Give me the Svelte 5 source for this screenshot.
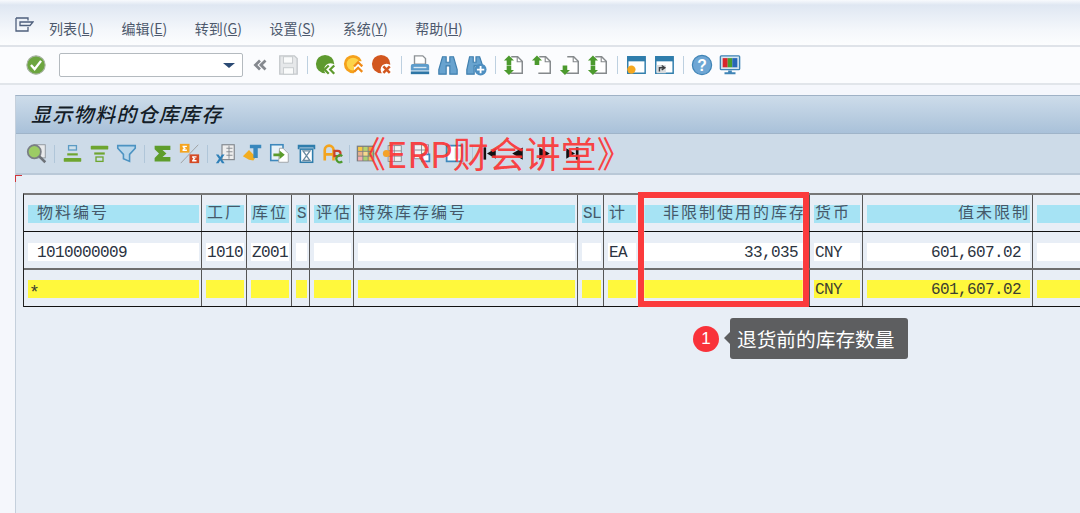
<script>
  const menus = [['列表','L'],['编辑','E'],['转到','G'],['设置','S'],['系统','Y'],['帮助','H']];
  const header = [
    {t:'物料编号',k:'lead'},{t:'工厂'},{t:'库位'},{t:'S',k:'latin'},{t:'评估',k:'mid'},{t:'特殊库存编号'},
    {t:'SL',k:'latin'},{t:'计'},{t:'非限制使用的库存',k:'end'},{t:'货币'},{t:'值未限制',k:'end'},{t:''}
  ];
  const dataRow = [
    {t:'1010000009',k:'lead'},{t:'1010'},{t:'Z001'},{t:''},{t:''},{t:''},{t:''},{t:'EA'},
    {t:'33,035',k:'end'},{t:'CNY'},{t:'601,607.02',k:'end'},{t:''}
  ];
  const sumRow = [
    {t:'*',k:'star'},{t:''},{t:''},{t:''},{t:''},{t:''},{t:''},{t:''},{t:''},{t:'CNY'},{t:'601,607.02',k:'end'},{t:''}
  ];
</script>

{#snippet page(up, down)}
  <svg class="ic" viewBox="0 0 24 24">
    <path d="M9 3h7l5 5v13H8" fill="#fff" stroke="#85898c" stroke-width="1.6"/>
    <path d="M15.5 3v5.5H21" fill="none" stroke="#85898c" stroke-width="1.2"/>
    {#if up}<path d="M6.500 1.500l5.500 5.500H9v5H4V7H1z" fill="#4c9a2e"/>{/if}
    {#if down}<path d="M6.500 23l5.500-5.500H9v-5H4v5H1z" fill="#4c9a2e"/>{/if}
  </svg>
{/snippet}

<div class="screen">
  <header class="menubar">
    <svg class="menuicon" viewBox="0 0 19 15">
      <path d="M1 1h12v2.500M1 1v13h12V10M5 5h13l-3 3.500H5z" fill="none" stroke="#4e5f7c" stroke-width="1.300"/>
    </svg>
    <nav class="menus">
      {#each menus as [label, key]}
        <span class="menu">{label}(<u>{key}</u>)</span>
      {/each}
    </nav>
  </header>

  <div class="systool">
    <span class="slot first"><svg class="ic" viewBox="0 0 24 24"><circle cx="12" cy="12" r="10" fill="#6ca53f" stroke="#a7b3a3" stroke-width="1.200"/><path d="M6.500 12l4 4.500 7-9" fill="none" stroke="#fff" stroke-width="2.600"/></svg></span>
    <div class="cmd"><svg class="drop" viewBox="0 0 12 6"><path d="M0 0h12L6 5z" fill="#2b4a74"/></svg></div>
    <span class="slot after"><svg class="ic" viewBox="0 0 24 24"><path d="M12 7l-5 5 5 5M18 7l-5 5 5 5" fill="none" stroke="#85898f" stroke-width="3"/></svg></span>
    <span class="slot"><svg class="ic" viewBox="0 0 24 24"><path d="M3 2h16l3 3v17H3z" fill="#e6e8ea" stroke="#c5c9cc" stroke-width="1.500"/><rect x="7" y="3" width="10" height="7" fill="#fafbfb" stroke="#c5c9cc"/><rect x="7" y="15" width="11" height="7" fill="#fafbfb" stroke="#c5c9cc"/></svg></span>
    <span class="sep"></span>
    <span class="slot"><svg class="ic" viewBox="0 0 24 24"><circle cx="11" cy="11" r="10" fill="#5e9a2f"/><circle cx="17" cy="17" r="7" fill="#fff"/><path d="M15 12.500l-4.500 4.500 4.500 4.500M21 12.500l-4.500 4.500 4.500 4.500" fill="none" stroke="#5e9a2f" stroke-width="2.400"/></svg></span>
    <span class="slot"><svg class="ic" viewBox="0 0 24 24"><circle cx="11" cy="11" r="10" fill="#f5a11c"/><circle cx="11" cy="11" r="7" fill="#fdd44a"/><path d="M17 8h4v16h-9V12z" fill="#fff"/><path d="M12 13.500l4.500-4.500 4.500 4.500M12 19.500l4.500-4.500 4.500 4.500" fill="none" stroke="#ef8a17" stroke-width="2.400"/></svg></span>
    <span class="slot"><svg class="ic" viewBox="0 0 24 24"><circle cx="11" cy="11" r="10" fill="#d2571f"/><circle cx="17" cy="17" r="6.500" fill="#fff"/><path d="M13.500 13.500l7 7M20.500 13.500l-7 7" stroke="#d2571f" stroke-width="2.800"/></svg></span>
    <span class="sep"></span>
    <span class="slot"><svg class="ic" viewBox="0 0 24 24"><path d="M6 2h9l3 3v6H6z" fill="#fff" stroke="#8d9296" stroke-width="1.500"/><path d="M4 11h16a2 2 0 0 1 2 2v5H2v-5a2 2 0 0 1 2-2z" fill="#5d9ccb"/><rect x="2" y="19" width="20" height="3" fill="#2e76a6"/><rect x="5" y="14" width="14" height="1.500" fill="#d7e8f4"/></svg></span>
    <span class="slot"><svg class="ic" viewBox="0 0 24 24"><path d="M6 3h4v6h4V3h4l4 14v5h-8v-9h-4v9H2v-5z" fill="#68a3cf" stroke="#3f7fae" stroke-width="1.300"/></svg></span>
    <span class="slot"><svg class="ic" viewBox="0 0 24 24"><path d="M5 3h4v6h3V3h4l3 9v3H13v-2h-3v9H2v-5z" fill="#68a3cf" stroke="#3f7fae" stroke-width="1.300"/><circle cx="17" cy="17" r="6.500" fill="#4e8fc1"/><path d="M17 13v8M13 17h8" stroke="#fff" stroke-width="2"/></svg></span>
    <span class="sep"></span>
    <span class="slot">{@render page(true, true)}</span>
    <span class="slot">{@render page(true, false)}</span>
    <span class="slot">{@render page(false, true)}</span>
    <span class="slot">{@render page(true, true)}</span>
    <span class="sep"></span>
    <span class="slot"><svg class="ic" viewBox="0 0 24 24"><rect x="3" y="3" width="19" height="18" fill="#fff" stroke="#2f7dac" stroke-width="1.600"/><rect x="3" y="3" width="19" height="5" fill="#2f7dac"/><circle cx="7" cy="17" r="4.500" fill="#f6a81f"/></svg></span>
    <span class="slot"><svg class="ic" viewBox="0 0 24 24"><rect x="3" y="3" width="19" height="18" fill="#fff" stroke="#2f7dac" stroke-width="1.600"/><rect x="3" y="3" width="19" height="5" fill="#2f7dac"/><rect x="4" y="12" width="10" height="9" fill="#d9dcde"/><path d="M7 19v-4h5M9.500 12.500L13 15l-3.500 2.500" fill="none" stroke="#3b3f43" stroke-width="1.500"/></svg></span>
    <span class="sep"></span>
    <span class="slot"><svg class="ic" viewBox="0 0 24 24"><circle cx="12" cy="12" r="10.500" fill="#6ea6d4" stroke="#3f84b6" stroke-width="1.300"/><text x="12" y="18" class="qmark">?</text></svg></span>
    <span class="slot"><svg class="ic" viewBox="0 0 24 24"><rect x="1.500" y="2" width="21" height="15" rx="1" fill="#d6e6f1" stroke="#3f84b6" stroke-width="1.500"/><rect x="4" y="4.500" width="5.500" height="10" fill="#d9262c"/><rect x="9.500" y="4.500" width="5" height="10" fill="#4a9e2f"/><rect x="14.500" y="4.500" width="5.500" height="10" fill="#2767b8"/><path d="M10 18h4v2h4v2H6v-2h4z" fill="#3f84b6"/></svg></span>
  </div>

  <main class="panel">
    <h1 class="title">显示物料的仓库库存</h1>

    <div class="apptool">
      <span class="aslot first"><svg class="ic" viewBox="0 0 24 24"><rect x="9" y="2" width="13" height="15" fill="#e8eaec" stroke="#8c9298"/><circle cx="9.500" cy="10" r="7.500" fill="#9ccc65" stroke="#7a7f85" stroke-width="2"/><path d="M15 15l7 7" stroke="#6d7278" stroke-width="3"/></svg></span>
      <span class="asep"></span>
      <span class="aslot"><svg class="ic" viewBox="0 0 24 24"><rect x="7.500" y="3" width="9" height="5" fill="#cfe0ea" stroke="#5c9bc4" stroke-width="1.500"/><path d="M6 13h12" stroke="#6ea52f" stroke-width="2.500"/><rect x="2" y="17" width="20" height="4.500" rx="1" fill="#6ea52f"/></svg></span>
      <span class="aslot"><svg class="ic" viewBox="0 0 24 24"><rect x="2" y="3" width="20" height="4.500" rx="1" fill="#6ea52f"/><path d="M6 12h12" stroke="#6ea52f" stroke-width="2.500"/><rect x="8" y="16" width="8" height="5" fill="#cfe0ea" stroke="#6ea52f" stroke-width="1.500"/></svg></span>
      <span class="aslot"><svg class="ic" viewBox="0 0 24 24"><path d="M2 3h20v3l-6.500 7v8l-7-3v-5L2 6z" fill="#b9d6ea" stroke="#4c93c2" stroke-width="1.800"/></svg></span>
      <span class="asep"></span>
      <span class="aslot"><svg class="ic" viewBox="0 0 24 24"><path d="M3 3h18v5h-9l4.500 4L12 16h9v5H3v-4l5-5-5-5z" fill="#5e9d2c"/></svg></span>
      <span class="aslot"><svg class="ic" viewBox="0 0 24 24"><rect x="1" y="1" width="11" height="10" fill="#f5a41f"/><path d="M4 3h5v1.500H6L8 6 6 7.500h3V9H4V7.500L5.500 6 4 4.500z" fill="#fff"/><path d="M2 23L22 2" stroke="#9a9a9a" stroke-width="1"/><rect x="12" y="13" width="11" height="10" fill="#d44a25"/><path d="M15 15h5v1.500h-3l2 1.500-2 1.500h3V21h-5v-1.500l1.500-1.500-1.500-1.500z" fill="#fff"/></svg></span>
      <span class="asep"></span>
      <span class="aslot"><svg class="ic" viewBox="0 0 24 24"><rect x="8" y="2" width="14" height="17" fill="#eee" stroke="#80868c" stroke-width="1.300"/><path d="M13 6h7M13 10h7M13 14h7M16 3v15" stroke="#80868c"/><path d="M1 13h3l2 3 2-3h3l-3.500 5 3.500 5H8l-2-3-2 3H1l3.500-5z" fill="#2f80b8"/></svg></span>
      <span class="aslot"><svg class="ic" viewBox="0 0 24 24"><path d="M1 15l7-7 5 5 4 1-4 6-5-1z" fill="#f2ad20"/><path d="M9 2h13v4h-4v11h-5V6H9z" fill="#3a88bd"/></svg></span>
      <span class="aslot"><svg class="ic" viewBox="0 0 24 24"><rect x="2" y="2" width="14" height="18" fill="#e8f2f8" stroke="#3e88bc" stroke-width="1.800"/><path d="M12 6h4l6 6v10H11z" fill="#fff" stroke="#9a9ea2"/><path d="M5 12h7V8.500l6 5-6 5V15H5z" fill="#5b9c2c"/></svg></span>
      <span class="aslot"><svg class="ic" viewBox="0 0 24 24"><path d="M2 2h20v5h-2v-2H4v2H2z" fill="#2f7dac"/><rect x="5" y="7" width="14" height="15" fill="#fff" stroke="#2f7dac" stroke-width="1.800"/><path d="M8 9h8l-8 11h8z" fill="none" stroke="#6a8aa0" stroke-width="1.500"/></svg></span>
      <span class="aslot"><svg class="ic" viewBox="0 0 24 24"><path d="M2 20V8a5 5 0 0 1 10 0v12M2 13h10" fill="none" stroke="#f3a41e" stroke-width="3"/><path d="M13 9h4a3 3 0 0 1 0 6h-4z" fill="none" stroke="#c9422a" stroke-width="2.500"/><path d="M22 15a4 4 0 1 0 0 6" fill="none" stroke="#4d9a2d" stroke-width="2.500"/></svg></span>
      <span class="asep tight"></span>
      <span class="aslot"><svg class="ic" viewBox="0 0 24 24"><rect x="2" y="3" width="20" height="18" fill="#7d7f80"/><rect x="3.500" y="4.500" width="5" height="4.500" fill="#f7c945"/><rect x="9.500" y="4.500" width="5" height="4.500" fill="#b6d36e"/><rect x="15.500" y="4.500" width="5" height="4.500" fill="#f2a53c"/><rect x="3.500" y="10" width="5" height="4.500" fill="#e8b08c"/><rect x="9.500" y="10" width="5" height="4.500" fill="#f6d98c"/><rect x="15.500" y="10" width="5" height="4.500" fill="#9cc45e"/><rect x="3.500" y="15.500" width="5" height="4.500" fill="#f5aeb0"/><rect x="9.500" y="15.500" width="5" height="4.500" fill="#a9cf72"/><rect x="15.500" y="15.500" width="5" height="4.500" fill="#f0c060"/></svg></span>
      <span class="aslot"><svg class="ic" viewBox="0 0 24 24"><rect x="7" y="3" width="15" height="18" fill="#f2f2f2" stroke="#80868c"/><path d="M7 9h15M7 15h15M14 3v18" stroke="#80868c"/><circle cx="5" cy="12" r="4" fill="#f3a32a"/></svg></span>
      <span class="aslot near"><svg class="ic" viewBox="0 0 24 24"><rect x="4" y="2" width="16" height="16" fill="#f2f2f2" stroke="#80868c"/><path d="M4 8h16M12 2v16" stroke="#80868c"/><rect x="12" y="12" width="10" height="10" fill="#3a88bd"/><rect x="14" y="14" width="6" height="6" fill="#fff"/></svg></span>
      <span class="aslot far"><svg class="ic" viewBox="0 0 24 24"><rect x="3" y="3" width="18" height="18" fill="#fff" stroke="#3e88bc" stroke-width="2"/><rect x="12" y="6" width="6" height="12" fill="#d4e4ef"/></svg></span>
      <span class="asep"></span>
      <span class="aslot"><svg class="ic" viewBox="0 0 24 24"><rect x="4" y="5" width="3" height="14" fill="#111"/><path d="M8 12l10-6v12z" fill="#111"/></svg></span>
      <span class="aslot"><svg class="ic" viewBox="0 0 24 24"><path d="M6 12l12-7v14z" fill="#111"/></svg></span>
      <span class="aslot"><svg class="ic" viewBox="0 0 24 24"><path d="M18 12L6 5v14z" fill="#111"/></svg></span>
      <span class="aslot"><svg class="ic" viewBox="0 0 24 24"><rect x="17" y="5" width="3" height="14" fill="#111"/><path d="M16 12L6 6v12z" fill="#111"/></svg></span>
    </div>

    <div class="content">
      <div class="grid">
        <div class="row hdr">
          {#each header as c}
            <div class="cell"><span class="bar {c.k ?? ''}">{c.t}</span></div>
          {/each}
        </div>
        <div class="row dat">
          {#each dataRow as c}
            <div class="cell"><span class="bar {c.k ?? ''}">{c.t}</span></div>
          {/each}
        </div>
        <div class="row sum">
          {#each sumRow as c}
            <div class="cell"><span class="bar {c.k ?? ''}">{c.t}</span></div>
          {/each}
        </div>
      </div>
    </div>
  </main>

  <div class="watermark">《ERP财会讲堂》</div>
  <div class="redbox"></div>
  <div class="note">
    <span class="badge">1</span>
    <span class="tip">退货前的库存数量</span>
  </div>
</div>

<style>
  :global(body) { margin: 0; }
  .screen {
    position: relative;
    width: 1080px;
    height: 513px;
    overflow: hidden;
    display: flex;
    flex-direction: column;
    background: #f5f7fc;
    font-family: "Noto Sans CJK SC", sans-serif;
  }
  .ic { display: block; width: 22px; height: 22px; }

  .menubar {
    height: 45px;
    box-sizing: border-box;
    padding: 14px 0 0 15px;
    display: flex;
    align-items: flex-start;
    background: linear-gradient(#f8fafd 0, #dfe7f2 5px, #f4f7fb 30px, #fcfdfe 45px);
  }
  .menuicon { width: 19px; height: 15px; margin-top: 3px; }
  .menus { display: flex; gap: 27.500px; margin-left: 15px; }
  .menu {
    font-size: 14px;
    line-height: 20px;
    color: #4c586c;
    white-space: nowrap;
    margin-top: 4px;
  }

  .systool {
    height: 40px;
    box-sizing: border-box;
    border-top: 2px solid #dfe3e9;
    border-bottom: 2px solid #e1e5ea;
    background: #fbfcfe;
    display: flex;
    align-items: center;
    padding-left: 22px;
  }
  .slot { width: 28px; display: flex; justify-content: center; flex: none; }
  .slot.after { margin-left: 3px; }
  .sep { width: 1px; height: 18px; margin: 0 4.500px; background: #bdd0e0; flex: none; }
  .cmd {
    width: 184px;
    height: 24px;
    box-sizing: border-box;
    margin-left: 9px;
    border: 1px solid #b4babf;
    border-radius: 2px;
    background: #fff;
    position: relative;
    flex: none;
  }
  .drop { position: absolute; right: 7px; top: 9px; width: 12px; height: 6px; }
  .qmark { font: bold 17px "Liberation Sans", sans-serif; fill: #fff; text-anchor: middle; }

  .panel {
    flex: 1;
    margin: 10px 0 0 15px;
    display: flex;
    flex-direction: column;
    min-height: 0;
    background: #e8eef6;
    border-top: 1px solid #9fb2c6;
    border-left: 1px solid #c5d0dc;
  }
  .title {
    margin: 0;
    height: 38px;
    box-sizing: border-box;
    padding-left: 15px;
    font-size: 20px;
    font-style: italic;
    font-weight: 500;
    line-height: 36px;
    letter-spacing: 1.300px;
    color: #141d28;
    background: linear-gradient(#cddcea, #a9c1d9);
    border-bottom: 1px solid #9fb4c9;
  }
  .apptool {
    height: 41px;
    box-sizing: border-box;
    display: flex;
    align-items: center;
    padding-left: 6.500px;
    background: #cddbe8;
    border-bottom: 2px solid #b9c8d7;
    flex: none;
  }
  .aslot { width: 27px; display: flex; justify-content: center; flex: none; }
  .aslot .ic { width: 21px; height: 21px; }
  .aslot.near { margin-left: 2px; }
  .aslot.far { margin-left: 6px; }
  .asep { width: 1px; height: 18px; margin: 0 4px; background: #b0c6d9; flex: none; }
  .asep.tight { margin: 0 2px; }

  .content { flex: 1; padding: 18px 0 0 7px; background: #e8eef6; position: relative; }
  .content::before {
    content: "";
    position: absolute;
    left: -1px;
    top: 0;
    width: 6px;
    height: 6px;
    border-left: 1px solid #d0353a;
    border-top: 1px solid #d0353a;
  }
  .grid { width: 1100px; border-left: 1px solid #222; border-top: 2px solid #777; }
  .row {
    display: grid;
    grid-template-columns: 178px 45px 45px 18px 44px 224px 26px 35px 171px 53px 170px 60px;
    align-items: stretch;
  }
  .hdr { height: 36px; border-bottom: 1px solid #111; }
  .dat { height: 36px; border-bottom: 2px solid #6e6e6e; }
  .sum { height: 36px; border-bottom: 1px solid #111; }
  .cell {
    border-right: 1px solid #555;
    box-sizing: border-box;
    padding: 10px 2px 0 4px;
    display: flex;
    align-items: flex-start;
    min-width: 0;
  }
  .dat .cell { padding-top: 11px; }
  .bar {
    flex: 1;
    height: 18px;
    min-width: 0;
    box-sizing: border-box;
    padding-left: 1px;
    font-family: "Liberation Mono", "Noto Sans CJK SC", monospace;
    font-size: 16px;
    letter-spacing: -0.600px;
    line-height: 20px;
    white-space: nowrap;
    overflow: hidden;
  }
  .hdr .bar {
    background: #a6e3f4;
    color: #45596a;
    font-size: 16px;
    letter-spacing: 2px;
    line-height: 19px;
  }
  .hdr .bar.latin { letter-spacing: -0.600px; }
  .dat .bar { background: #fff; color: #2b3340; }
  .sum .bar { background: #fff83c; color: #3c4030; }
  .bar.lead { padding-left: 9px; }
  .bar.mid { padding-left: 2px; }
  .bar.end { text-align: right; padding-right: 9px; }
  .hdr .bar.end { padding-right: 0; }
  .bar.star { line-height: 18px; font-size: 18px; padding-top: 4px; overflow: visible; }

  .watermark {
    position: absolute;
    left: 350px;
    top: 129px;
    font-size: 36px;
    line-height: 46px;
    white-space: nowrap;
    color: rgba(252, 52, 52, 0.92);
  }
  .redbox {
    position: absolute;
    left: 638px;
    top: 192px;
    width: 171px;
    height: 115px;
    box-sizing: border-box;
    border: 6px solid #fb3a3c;
    box-shadow: inset 0 0 0 1px rgba(255,255,255,.25);
  }
  .note {
    position: absolute;
    left: 693px;
    top: 318px;
    display: flex;
    align-items: center;
  }
  .badge {
    width: 26px;
    height: 26px;
    border-radius: 50%;
    background: #f9323a;
    color: #fff;
    font: 17px/26px "Liberation Sans", sans-serif;
    text-align: center;
  }
  .tip {
    position: relative;
    margin-left: 11px;
    width: 178px;
    height: 41px;
    box-sizing: border-box;
    padding-left: 7px;
    border-radius: 3px;
    background: #5d5e60;
    color: #fff;
    font-size: 19.700px;
    line-height: 41px;
    white-space: nowrap;
  }
  .tip::before {
    content: "";
    position: absolute;
    left: -6px;
    top: 14px;
    border-style: solid;
    border-width: 6px 6px 6px 0;
    border-color: transparent #5d5e60 transparent transparent;
  }
</style>
